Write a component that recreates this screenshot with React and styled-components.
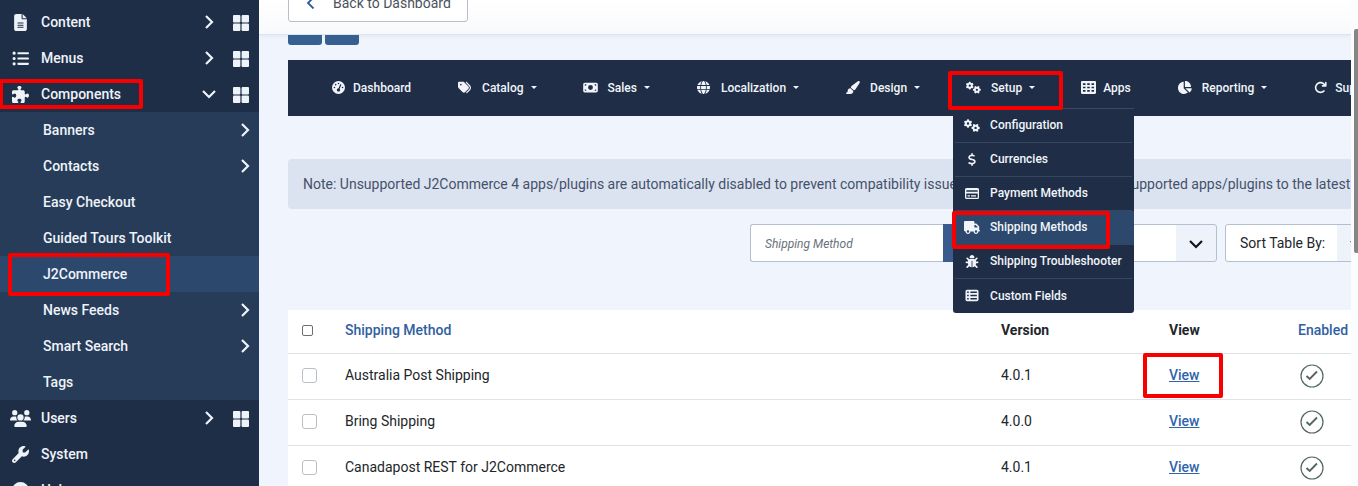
import React from "react";
import styled, { createGlobalStyle, css } from "styled-components";
import {
  FaFileLines, FaListUl, FaPuzzlePiece, FaUsers, FaWrench, FaCircleInfo,
  FaTags, FaMoneyBill, FaGlobe, FaPaintbrush, FaChartPie, FaArrowRotateRight,
  FaDollarSign, FaTruck, FaBug, FaTableList, FaGaugeHigh, FaMagnifyingGlass, FaGears,
} from "react-icons/fa6";

const Global = createGlobalStyle`
  *, *::before, *::after { box-sizing: border-box; }
  body { margin: 0; font-family: Roboto, "Liberation Sans", sans-serif; font-size: 14px; color: #22262a; }
  a { color: inherit; text-decoration: none; }
  button, input, select { font: inherit; color: inherit; margin: 0; }
`;

const Shell = styled.div`
  display: flex;
  height: 100vh;
  overflow: hidden;
`;

const Highlight = styled.span`
  position: absolute;
  inset: ${(p) => p.$inset};
  border: 4px solid #f80000;
  border-radius: 2px;
  pointer-events: none;
  z-index: 5;
`;

/* Sidebar */
const Sidebar = styled.nav`
  flex: 0 0 259px;
  padding-top: 4px;
  background: #1f2e47;
  color: #eef3fa;
  font-weight: 500;
  overflow: hidden;
`;

const SideList = styled.ul`
  list-style: none;
  margin: 0;
  padding: 0;
`;

const SubList = styled(SideList)`
  background: #273c58;
`;

const SideRow = styled.li`
  position: relative;
  display: flex;
  align-items: center;
  height: 36px;
  padding: 0 10px 0 ${(p) => (p.$sub ? 43 : 10)}px;
  ${(p) => p.$active && css`background: #2d486d;`}
`;

const SideIcon = styled.span`
  display: flex;
  width: 21px;
  margin-right: 10px;
  svg { height: 17px; width: 21px; }
`;

const SideLink = styled.a`
  flex: 1;
`;

const Plain = styled.button`
  display: flex;
  padding: 0;
  border: 0;
  background: none;
`;

const Chevron = ({ down }) => (
  <svg width="14" height="14" viewBox="0 0 14 14" fill="none" stroke="currentColor" strokeWidth="2.2" aria-hidden="true">
    <path d={down ? "M1 4l6 6 6-6" : "M4 1l6 6-6 6"} />
  </svg>
);

const Toggle = styled(Plain)`
  margin-right: ${(p) => (p.$withGrid ? 17 : -3)}px;
`;

const GridLink = styled.a`
  display: flex;
  margin-top: 2px;
`;

const GridIcon = () => (
  <svg width="16" height="16" viewBox="0 0 16 16" fill="currentColor" aria-hidden="true">
    <rect x="0" y="0" width="7.4" height="7.4" rx="1" />
    <rect x="8.6" y="0" width="7.4" height="7.4" rx="1" />
    <rect x="0" y="8.6" width="7.4" height="7.4" rx="1" />
    <rect x="8.6" y="8.6" width="7.4" height="7.4" rx="1" />
  </svg>
);

/* Main column */
const Main = styled.main`
  flex: 1;
  min-width: 0;
  overflow: hidden;
  background: #f0f5fd;
`;

const Subhead = styled.header`
  display: flex;
  align-items: flex-end;
  height: 35px;
  padding: 0 29px 12px;
  background: linear-gradient(#ffffff, #f8f9fc);
  border-bottom: 1px solid #dfe3ec;
  box-shadow: 0 2px 4px rgba(40, 60, 100, 0.06);
`;

const BackButton = styled.button`
  flex: none;
  display: flex;
  align-items: center;
  gap: 16px;
  height: 38px;
  padding: 0 16px;
  border: 1px solid #b9bfca;
  border-radius: 3px;
  background: #fff;
  color: #4a525c;
  svg { color: #2f5a94; }
`;

const Content = styled.div`
  width: calc(100% + 27px);
  padding-left: 29px;
`;

const ActionTabs = styled.div`
  display: flex;
  gap: 3px;
  margin-bottom: 15px;
`;

const ActionTab = styled.button`
  width: 34px;
  height: 10px;
  padding: 0;
  border: 0;
  border-radius: 0 0 3px 3px;
  background: #35608f;
`;

const MenuBar = styled.nav`
  display: flex;
  align-items: center;
  gap: 46px;
  height: 56px;
  padding: 0 0 1px 43px;
  background: #1f2e46;
  color: #f1f5fb;
  font-size: 12px;
  font-weight: 500;
  line-height: 16px;
  white-space: nowrap;
`;

const MenuItem = styled.div`
  position: relative;
  flex: none;
`;

const MenuLink = styled.a`
  display: flex;
  align-items: center;
  gap: ${(p) => (p.$menu ? 10 : 7)}px;
  svg { height: 13px; width: 15px; }
`;

const MenuLabel = styled.span`
  display: flex;
  align-items: center;
  gap: 7px;
`;

const Caret = styled.span`
  border: 3px solid transparent;
  border-top-color: currentColor;
  border-bottom: 0;
`;

const Dropdown = styled.ul`
  position: absolute;
  top: 28px;
  left: -13px;
  z-index: 3;
  width: 181px;
  margin: 0;
  padding: 0;
  list-style: none;
  background: #1f2e46;
  border-top: 1px solid #3a4a63;
  border-radius: 0 0 3px 3px;
`;

const DropItem = styled.li`
  position: relative;
  height: 34px;
  padding: 0 2px;
  ${(p) => p.$active && css`background: #2d486d;`}
`;

const DropLink = styled.a`
  display: flex;
  align-items: center;
  height: 34px;
  padding-left: 9px;
  gap: 10px;
  ${(p) => !p.$last && css`border-bottom: 1px solid #35465f;`}
  svg { height: 13px; width: 16px; }
`;

const Note = styled.div`
  margin-top: 43px;
  padding: 0 15px;
  line-height: 50px;
  background: #dce3f0;
  color: #44516a;
  border-radius: 4px;
  white-space: nowrap;
  overflow: hidden;
`;

const Filters = styled.form`
  display: flex;
  justify-content: flex-end;
  gap: 8px;
  margin: 15px 0 48px;
`;

const SearchGroup = styled.div`
  display: flex;
  height: 38px;
`;

const SearchInput = styled.input`
  width: 193px;
  padding: 0 14px;
  border: 1px solid #b4bfcf;
  border-right: 0;
  border-radius: 3px 0 0 3px;
  background: #fff;
  &::placeholder { color: #6b727b; font-size: 12px; font-style: italic; opacity: 1; }
`;

const SearchButton = styled.button`
  width: 38px;
  padding: 0;
  border: 0;
  background: #3a5c8d;
  color: #fff;
`;

const SelectWrap = styled.div`
  position: relative;
  display: flex;
  width: ${(p) => p.$width}px;
  height: 38px;
  border: 1px solid #b4bfcf;
  border-radius: 3px;
  background: linear-gradient(to left, #eef2fb 40px, #fff 40px);
  overflow: hidden;
  svg { position: absolute; right: 13px; top: 12px; pointer-events: none; color: #10151c; }
`;

const Select = styled.select`
  flex: 1;
  padding: 0 14px;
  border: 0;
  appearance: none;
  background: transparent;
`;

const Table = styled.table`
  width: 100%;
  table-layout: fixed;
  border-collapse: collapse;
  background: #fff;
`;

const Col = styled.col`
  width: ${(p) => p.$width}px;
`;

const Cell = styled.td`
  height: 46px;
  padding: 0 8px 2px;
  border-bottom: 1px solid #dfe2e6;
  &:first-child { padding-left: 14px; }
`;

const HeadCell = styled.th`
  height: 43px;
  padding: 0 8px 2px;
  border-bottom: 1px solid #dfe2e6;
  text-align: left;
  font-weight: ${(p) => (p.$link ? 500 : 700)};
  color: ${(p) => (p.$link ? "#30609f" : "#22262a")};
  &:first-child { padding-left: 14px; }
`;

const Check = styled.input`
  display: block;
  appearance: none;
  width: ${(p) => (p.$small ? 11 : 15)}px;
  height: ${(p) => (p.$small ? 11 : 15)}px;
  border: 1px solid ${(p) => (p.$small ? "#6b6f75" : "#b9bfc6")};
  border-radius: ${(p) => (p.$small ? 2 : 3)}px;
  background: #fff;
`;

const ViewLink = styled.a`
  position: relative;
  color: #2f64ad;
  font-weight: 500;
  text-decoration: underline;
`;

const StatusButton = styled(Plain)`
  margin: 2px 0 0 2px;
`;

const StatusIcon = () => (
  <svg width="24" height="24" viewBox="0 0 24 24" fill="none" aria-hidden="true">
    <circle cx="12" cy="12" r="11" stroke="#4f6a5c" strokeWidth="1.2" />
    <path d="M6.500 12l3.200 3L17 7.500" stroke="#4f6a5c" strokeWidth="1.9" />
  </svg>
);

const Gutter = styled.div`
  flex: 0 0 7px;
  display: flex;
  justify-content: flex-end;
  padding-top: 29px;
  background: #fbfcfe;
`;

const Thumb = styled.div`
  width: 4px;
  height: 224px;
  border-radius: 2px 0 0 2px;
  background: #868686;
`;

const CardIcon = () => (
  <svg viewBox="0 0 16 13" fill="currentColor" aria-hidden="true">
    <path fillRule="evenodd" d="M2.500 1h11A1.500 1.500 0 0 1 15 2.500v8a1.500 1.500 0 0 1-1.500 1.500h-11A1.500 1.500 0 0 1 1 10.500v-8A1.500 1.500 0 0 1 2.500 1zM2.300 3.300v1.500h11.400V3.300zM2.300 6.500v4.200h11.400V6.500zM3.500 8.200h2.500v1.300h-2.500zM7 8.200h5v1.300H7z" />
  </svg>
);

const AppsIcon = () => (
  <svg viewBox="0 0 14 12" fill="currentColor" aria-hidden="true">
    <path fillRule="evenodd" d="M1 0h12a1 1 0 0 1 1 1v10a1 1 0 0 1-1 1H1a1 1 0 0 1-1-1V1a1 1 0 0 1 1-1zM1.800 2v1.600h2.400V2zM5.800 2v1.600h2.400V2zM9.800 2v1.600h2.400V2zM1.800 5.200v1.600h2.400V5.200zM5.800 5.200v1.600h2.400V5.200zM9.800 5.200v1.600h2.400V5.200zM1.800 8.400V10h2.400V8.400zM5.800 8.400V10h2.400V8.400zM9.800 8.400V10h2.400V8.400z" />
  </svg>
);

const subItems = [
  { label: "Banners", more: true },
  { label: "Contacts", more: true },
  { label: "Easy Checkout" },
  { label: "Guided Tours Toolkit" },
  { label: "J2Commerce", active: true },
  { label: "News Feeds", more: true },
  { label: "Smart Search", more: true },
  { label: "Tags" },
];

const sideItems = [
  { label: "Content", icon: FaFileLines, grid: true },
  { label: "Menus", icon: FaListUl, grid: true },
  { label: "Components", icon: FaPuzzlePiece, grid: true, open: true },
  { label: "Users", icon: FaUsers, grid: true },
  { label: "System", icon: FaWrench },
  { label: "Help", icon: FaCircleInfo },
];

const setupItems = [
  { label: "Configuration", icon: FaGears },
  { label: "Currencies", icon: FaDollarSign },
  { label: "Payment Methods", icon: CardIcon },
  { label: "Shipping Methods", icon: FaTruck, active: true },
  { label: "Shipping Troubleshooter", icon: FaBug },
  { label: "Custom Fields", icon: FaTableList },
];

const menuItems = [
  { label: "Dashboard", icon: FaGaugeHigh },
  { label: "Catalog", icon: FaTags, menu: true },
  { label: "Sales", icon: FaMoneyBill, menu: true },
  { label: "Localization", icon: FaGlobe, menu: true },
  { label: "Design", icon: FaPaintbrush, menu: true },
  { label: "Setup", icon: FaGears, menu: true, items: setupItems },
  { label: "Apps", icon: AppsIcon },
  { label: "Reporting", icon: FaChartPie, menu: true },
  { label: "Support", icon: FaArrowRotateRight },
];

const methods = [
  { name: "Australia Post Shipping", version: "4.0.1", marked: true },
  { name: "Bring Shipping", version: "4.0.0" },
  { name: "Canadapost REST for J2Commerce", version: "4.0.1" },
];

function SideEntry({ item }) {
  const Icon = item.icon;
  return (
    <>
      <SideRow>
        <SideIcon><Icon /></SideIcon>
        <SideLink href="#">{item.label}</SideLink>
        {item.grid && (
          <>
            <Toggle $withGrid type="button" aria-label={`Expand ${item.label}`}><Chevron down={item.open} /></Toggle>
            <GridLink href="#" aria-label={`${item.label} dashboard`}><GridIcon /></GridLink>
          </>
        )}
        {item.open && <Highlight $inset="3px 116px 3px -1px" />}
      </SideRow>
      {item.open && (
        <li>
          <SubList>
            {subItems.map((s) => (
              <SideRow key={s.label} $sub $active={s.active}>
                <SideLink href="#">{s.label}</SideLink>
                {s.more && <Toggle type="button" aria-label={`Expand ${s.label}`}><Chevron /></Toggle>}
                {s.active && <Highlight $inset="-3px 89px -4px 8px" />}
              </SideRow>
            ))}
          </SubList>
        </li>
      )}
    </>
  );
}

export default function App() {
  return (
    <Shell>
      <Global />
      <Sidebar aria-label="Main menu">
        <SideList>{sideItems.map((i) => <SideEntry key={i.label} item={i} />)}</SideList>
      </Sidebar>
      <Main>
        <Subhead>
          <BackButton type="button">
            <svg width="12" height="12" viewBox="0 0 12 12" fill="none" stroke="currentColor" strokeWidth="1.8" aria-hidden="true"><path d="M8.500 0.500L3 6l5.500 5.500" /></svg>
            Back to Dashboard
          </BackButton>
        </Subhead>
        <Content>
          <ActionTabs>
            <ActionTab type="button" aria-label="Previous" />
            <ActionTab type="button" aria-label="Next" />
          </ActionTabs>
          <MenuBar aria-label="Store menu">
            {menuItems.map(({ label, icon: Icon, menu, items }) => (
              <MenuItem key={label}>
                <MenuLink href="#" $menu={menu}>
                  <Icon />
                  <MenuLabel>{label}{menu && <Caret />}</MenuLabel>
                </MenuLink>
                {items && (
                  <>
                    <Highlight $inset="-9px -28px -14px -18px" />
                    <Dropdown>
                      {items.map((d, n) => (
                        <DropItem key={d.label} $active={d.active}>
                          <DropLink href="#" $last={n === items.length - 1}><d.icon />{d.label}</DropLink>
                          {d.active && <Highlight $inset="0 24px -4px -1px" />}
                        </DropItem>
                      ))}
                    </Dropdown>
                  </>
                )}
              </MenuItem>
            ))}
          </MenuBar>
          <Note>
            Note: Unsupported J2Commerce 4 apps/plugins are automatically disabled to prevent compatibility issues. Please upgrade these unsupported apps/plugins to the latest versions.
          </Note>
          <Filters>
            <SearchGroup>
              <SearchInput type="text" placeholder="Shipping Method" aria-label="Shipping Method" />
              <SearchButton type="button" aria-label="Search"><FaMagnifyingGlass /></SearchButton>
            </SearchGroup>
            <SelectWrap $width={228}>
              <Select aria-label="Status"><option>Status</option></Select>
              <Chevron down />
            </SelectWrap>
            <SelectWrap $width={153}>
              <Select aria-label="Sort table by"><option>Sort Table By:</option></Select>
              <Chevron down />
            </SelectWrap>
          </Filters>
          <Table>
            <colgroup>
              <Col $width={49} />
              <col />
              <Col $width={168} />
              <Col $width={129} />
              <Col $width={88} />
            </colgroup>
            <thead>
              <tr>
                <HeadCell><Check $small type="checkbox" aria-label="Select all" /></HeadCell>
                <HeadCell $link><a href="#">Shipping Method</a></HeadCell>
                <HeadCell>Version</HeadCell>
                <HeadCell>View</HeadCell>
                <HeadCell $link><a href="#">Enabled</a></HeadCell>
              </tr>
            </thead>
            <tbody>
              {methods.map((m) => (
                <tr key={m.name}>
                  <Cell><Check type="checkbox" aria-label={`Select ${m.name}`} /></Cell>
                  <Cell>{m.name}</Cell>
                  <Cell>{m.version}</Cell>
                  <Cell>
                    <ViewLink href="#">View{m.marked && <Highlight $inset="-14px -23px -15px -26px" />}</ViewLink>
                  </Cell>
                  <Cell><StatusButton type="button" aria-label="Enabled"><StatusIcon /></StatusButton></Cell>
                </tr>
              ))}
            </tbody>
          </Table>
        </Content>
      </Main>
      <Gutter><Thumb /></Gutter>
    </Shell>
  );
}
